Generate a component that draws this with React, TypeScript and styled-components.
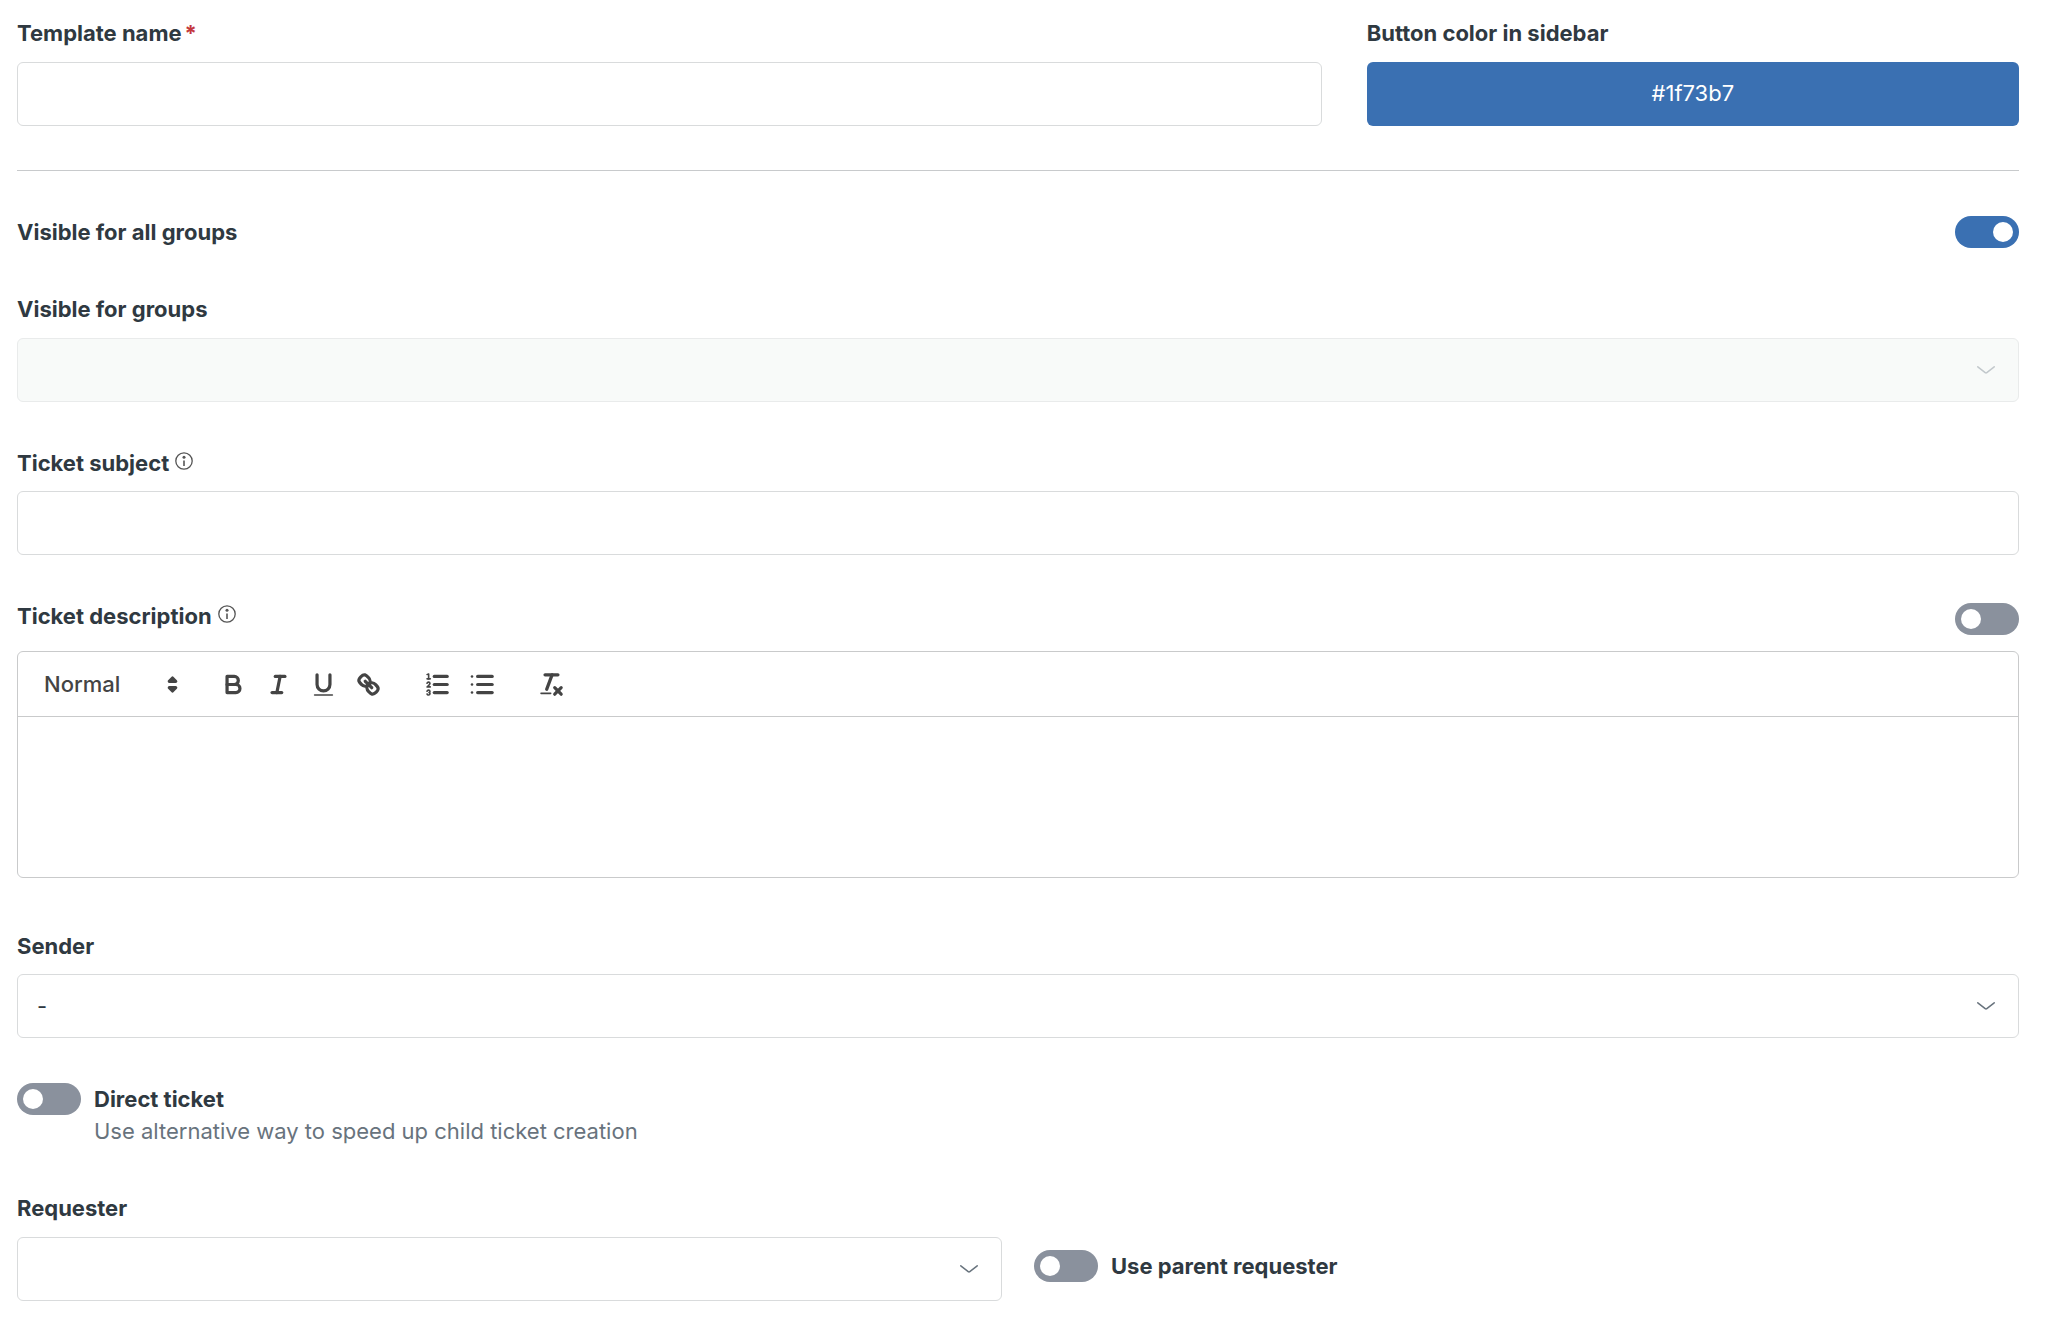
import React, { useState } from "react";
import styled, { createGlobalStyle } from "styled-components";

const GlobalStyle = createGlobalStyle`
  *, *::before, *::after { box-sizing: border-box; }
  body {
    margin: 0;
    background: #fff;
    color: #2f3941;
    font-family: Inter, Roboto, "Liberation Sans", sans-serif;
    font-size: 22px;
    line-height: 32px;
  }
  button, input, select, textarea { font: inherit; color: inherit; }
`;

const Form = styled.form`
  display: flex;
  flex-direction: column;
  gap: 45px;
  padding: 17px 41px 17px 17px;
`;

const NameRow = styled.div`
  display: grid;
  grid-template-columns: 2fr 1fr;
  gap: 45px;
`;

const Divider = styled.hr`
  width: 100%;
  height: 1px;
  margin: -1px 0 0;
  border: 0;
  background: #c8cacc;
`;

const Field = styled.div<{ $gap?: number }>`
  display: flex;
  flex-direction: column;
  gap: ${(p) => p.$gap ?? 13}px;
`;

const Label = styled.label`
  font-weight: 650;
`;

const Required = styled.span`
  margin-left: 3px;
  color: #c4373d;
`;

const LabelLine = styled.div`
  display: flex;
  align-items: center;
  gap: 6px;
`;

const InfoIcon = styled.svg`
  width: 18px;
  height: 18px;
  margin-bottom: 4px;
`;

const SpacedRow = styled.div`
  display: flex;
  justify-content: space-between;
  align-items: center;
`;

const DescriptionHeader = styled.div`
  display: flex;
  justify-content: space-between;
  align-items: flex-start;
  min-height: 35px;

  > input { align-self: flex-end; }
`;

const TextInput = styled.input`
  width: 100%;
  height: 64px;
  padding: 0 20px;
  border: 1px solid #d9dbdc;
  border-radius: 6px;
  background: #fff;
`;

const ColorButton = styled.button`
  height: 64px;
  padding: 0 20px 2px;
  border: 0;
  border-radius: 6px;
  background: #3a70b2;
  color: #fff;
  cursor: pointer;
`;

const SelectBox = styled.div`
  display: grid;
  align-items: center;

  > * { grid-area: 1 / 1; }
`;

const Select = styled.select`
  width: 100%;
  height: 64px;
  padding: 0 64px 0 19px;
  border: 1px solid #d9dbdc;
  border-radius: 6px;
  background: #fff;
  appearance: none;
  opacity: 1;

  &:disabled {
    border-color: #e9ebeb;
    background: #f8faf9;
  }
`;

const Chevron = styled.svg<{ $muted?: boolean }>`
  justify-self: end;
  width: 18px;
  height: 8px;
  margin: 0 24px 1px 0;
  color: ${(p) => (p.$muted ? "#c2c8cc" : "#68737d")};
  pointer-events: none;
`;

const Switch = styled.input`
  flex: none;
  display: flex;
  align-items: center;
  width: 64px;
  height: 32px;
  margin: 0;
  padding: 6px;
  border-radius: 16px;
  background: #8a919d;
  appearance: none;
  cursor: pointer;

  &::before {
    content: "";
    width: 20px;
    height: 20px;
    border-radius: 50%;
    background: #fff;
  }

  &:checked {
    justify-content: flex-end;
    background: #3a70b2;
  }
`;

const Editor = styled.div`
  display: flex;
  flex-direction: column;
  margin-bottom: 7px;
  border: 1px solid #c9cacb;
  border-radius: 6px;
`;

const Toolbar = styled.div`
  display: flex;
  align-items: center;
  gap: 24px;
  height: 65px;
  padding: 0 13px;
  border-bottom: 1px solid #c9cacb;
  color: #444;
`;

const ToolGroup = styled.div`
  display: flex;
`;

const ToolButton = styled.button`
  display: flex;
  justify-content: center;
  width: 45px;
  height: 39px;
  padding: 5px 8px;
  border: 0;
  background: none;
  cursor: pointer;
`;

const ToolIcon = styled.svg`
  width: 29px;
  height: 29px;
  fill: none;
  stroke: #444;
  stroke-width: 2;
  stroke-linecap: round;
  stroke-linejoin: round;
  pointer-events: none;

  .thin { stroke-width: 1; }
  .fill { fill: #444; stroke: none; }
`;

const FormatBox = styled(SelectBox)`
  width: 156px;

  > svg { justify-self: end; }
`;

const FormatSelect = styled.select`
  width: 100%;
  height: 39px;
  padding: 0 32px 0 13px;
  border: 0;
  background: none;
  font-weight: 500;
  appearance: none;
`;

const EditorArea = styled.textarea`
  display: block;
  height: 160px;
  padding: 20px;
  border: 0;
  border-radius: 6px;
  background: none;
  resize: none;
`;

const SwitchRow = styled.div`
  display: flex;
  align-items: flex-start;
  gap: 13px;
`;

const SwitchText = styled.div`
  display: flex;
  flex-direction: column;
`;

const Hint = styled.span`
  color: #68737d;
`;

const RequesterRow = styled.div`
  display: grid;
  grid-template-columns: 1fr 1fr;
  align-items: center;
  gap: 32px;

  > ${SwitchRow} { padding-bottom: 6px; }
`;

function Info() {
  return (
    <InfoIcon viewBox="0 0 18 18" fill="none" role="img" aria-label="More information">
      <circle cx="9" cy="9" r="8.2" stroke="#555" strokeWidth="1.3" />
      <circle cx="9" cy="5.2" r="1.5" fill="#555" />
      <path d="M9 8.6V14" stroke="#555" strokeWidth="1.6" />
    </InfoIcon>
  );
}

function Dropdown({ id, disabled, options }: { id: string; disabled?: boolean; options: string[] }) {
  return (
    <SelectBox>
      <Select id={id} disabled={disabled}>
        {options.map((o) => (
          <option key={o}>{o}</option>
        ))}
      </Select>
      <Chevron $muted={disabled} viewBox="0 0 18 8" fill="none" aria-hidden="true">
        <path d="M0.8 0.8L8.2 6.6Q9 7.2 9.8 6.6L17.2 0.8" stroke="currentColor" strokeWidth="1.5" strokeLinecap="round" />
      </Chevron>
    </SelectBox>
  );
}

function Tool({ label, children }: { label: string; children: React.ReactNode }) {
  return (
    <ToolButton type="button" aria-label={label}>
      <ToolIcon viewBox="0 0 18 18">{children}</ToolIcon>
    </ToolButton>
  );
}

function DescriptionEditor() {
  return (
    <Editor>
      <Toolbar>
        <FormatBox>
          <FormatSelect aria-label="Text format">
            <option>Normal</option>
          </FormatSelect>
          <ToolIcon viewBox="0 0 18 18" aria-hidden="true">
            <polygon fill="#444" points="7 11 9 13 11 11 7 11" />
            <polygon fill="#444" points="7 7 9 5 11 7 7 7" />
          </ToolIcon>
        </FormatBox>
        <ToolGroup>
          <Tool label="Bold">
            <path d="M5,4H9.5A2.5,2.5,0,0,1,12,6.5v0A2.5,2.5,0,0,1,9.5,9H5A0,0,0,0,1,5,9V4A0,0,0,0,1,5,4Z" />
            <path d="M5,9h5.5A2.5,2.5,0,0,1,13,11.5v0A2.5,2.5,0,0,1,10.5,14H5a0,0,0,0,1,0,0V9A0,0,0,0,1,5,9Z" />
          </Tool>
          <Tool label="Italic">
            <line x1="7" x2="13" y1="4" y2="4" />
            <line x1="5" x2="11" y1="14" y2="14" />
            <line x1="8" x2="10" y1="14" y2="4" />
          </Tool>
          <Tool label="Underline">
            <path d="M5,3V9a4.012,4.012,0,0,0,4,4H9a4.012,4.012,0,0,0,4-4V3" />
            <rect className="fill" height="1" rx="0.5" ry="0.5" width="12" x="3" y="15" />
          </Tool>
          <Tool label="Link">
            <line x1="7" x2="11" y1="7" y2="11" />
            <path d="M8.9,4.577a3.476,3.476,0,0,1,.36,4.679A3.476,3.476,0,0,1,4.577,8.9C3.185,7.5,2.035,6.4,4.217,4.217S7.5,3.185,8.9,4.577Z" />
            <path d="M13.423,9.1a3.476,3.476,0,0,0-4.679-.36,3.476,3.476,0,0,0,.36,4.679c1.392,1.392,2.5,2.542,4.679.36S14.815,10.5,13.423,9.1Z" />
          </Tool>
        </ToolGroup>
        <ToolGroup>
          <Tool label="Numbered list">
            <line x1="7" x2="15" y1="4" y2="4" />
            <line x1="7" x2="15" y1="9" y2="9" />
            <line x1="7" x2="15" y1="14" y2="14" />
            <line className="thin" x1="2.5" x2="4.5" y1="5.5" y2="5.5" />
            <path
              className="fill"
              d="M3.5,6A0.5,0.5,0,0,1,3,5.5V3.085l-0.276.138A0.5,0.5,0,0,1,2.053,3c-0.124-.247-0.023-0.324.224-0.447l1-.5A0.5,0.5,0,0,1,4,2.5v3A0.5,0.5,0,0,1,3.5,6Z"
            />
            <path className="thin" d="M4.5,10.5h-2c0-.234,1.85-1.076,1.85-2.234A0.959,0.959,0,0,0,2.5,8.156" />
            <path className="thin" d="M2.5,14.846a0.959,0.959,0,0,0,1.85-.109A0.7,0.7,0,0,0,3.75,14a0.688,0.688,0,0,0,.6-0.736,0.959,0.959,0,0,0-1.85-.109" />
          </Tool>
          <Tool label="Bulleted list">
            <line x1="6" x2="15" y1="4" y2="4" />
            <line x1="6" x2="15" y1="9" y2="9" />
            <line x1="6" x2="15" y1="14" y2="14" />
            <circle className="fill" cx="2.5" cy="4" r="0.8" />
            <circle className="fill" cx="2.5" cy="9" r="0.8" />
            <circle className="fill" cx="2.5" cy="14" r="0.8" />
          </Tool>
        </ToolGroup>
        <ToolGroup>
          <Tool label="Clear formatting">
            <line x1="5" x2="13" y1="3" y2="3" />
            <line x1="6" x2="9.35" y1="12" y2="3" />
            <line x1="11" x2="15" y1="11" y2="15" />
            <line x1="15" x2="11" y1="11" y2="15" />
            <rect className="fill" height="1" rx="0.5" ry="0.5" width="7" x="2" y="14" />
          </Tool>
        </ToolGroup>
      </Toolbar>
      <EditorArea id="ticket-description" />
    </Editor>
  );
}

export default function App() {
  const [allGroups, setAllGroups] = useState(true);

  return (
    <>
      <GlobalStyle />
      <Form onSubmit={(e) => e.preventDefault()}>
        <NameRow>
          <Field>
            <Label htmlFor="template-name">
              Template name<Required>*</Required>
            </Label>
            <TextInput id="template-name" type="text" required />
          </Field>
          <Field>
            <Label htmlFor="button-color">Button color in sidebar</Label>
            <ColorButton id="button-color" type="button">
              #1f73b7
            </ColorButton>
          </Field>
        </NameRow>

        <Divider />

        <SpacedRow>
          <Label htmlFor="all-groups">Visible for all groups</Label>
          <Switch
            id="all-groups"
            type="checkbox"
            role="switch"
            checked={allGroups}
            onChange={(e) => setAllGroups(e.target.checked)}
          />
        </SpacedRow>

        <Field>
          <Label htmlFor="groups">Visible for groups</Label>
          <Dropdown id="groups" disabled={allGroups} options={[""]} />
        </Field>

        <Field $gap={12}>
          <LabelLine>
            <Label htmlFor="ticket-subject">Ticket subject</Label>
            <Info />
          </LabelLine>
          <TextInput id="ticket-subject" type="text" />
        </Field>

        <Field $gap={16}>
          <DescriptionHeader>
            <LabelLine>
              <Label htmlFor="ticket-description">Ticket description</Label>
              <Info />
            </LabelLine>
            <Switch type="checkbox" role="switch" aria-label="Enable ticket description" />
          </DescriptionHeader>
          <DescriptionEditor />
        </Field>

        <Field $gap={12}>
          <Label htmlFor="sender">Sender</Label>
          <Dropdown id="sender" options={["-"]} />
        </Field>

        <SwitchRow>
          <Switch id="direct-ticket" type="checkbox" role="switch" aria-describedby="direct-ticket-hint" />
          <SwitchText>
            <Label htmlFor="direct-ticket">Direct ticket</Label>
            <Hint id="direct-ticket-hint">Use alternative way to speed up child ticket creation</Hint>
          </SwitchText>
        </SwitchRow>

        <Field>
          <Label htmlFor="requester">Requester</Label>
          <RequesterRow>
            <Dropdown id="requester" options={[""]} />
            <SwitchRow>
              <Switch id="parent-requester" type="checkbox" role="switch" />
              <Label htmlFor="parent-requester">Use parent requester</Label>
            </SwitchRow>
          </RequesterRow>
        </Field>
      </Form>
    </>
  );
}
